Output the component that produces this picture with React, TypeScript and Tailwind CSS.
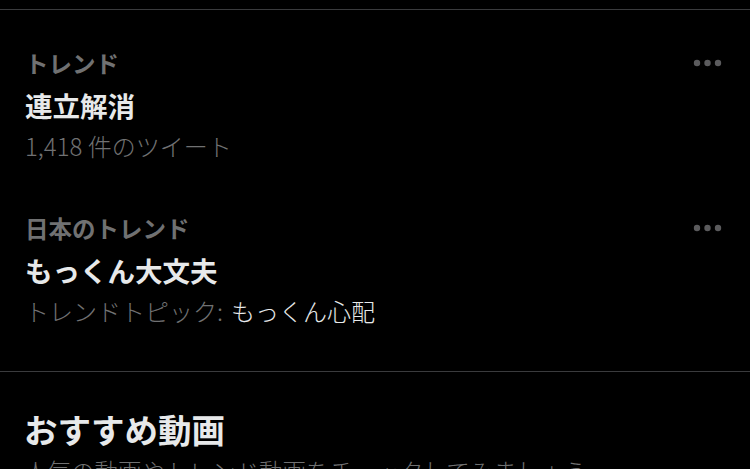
import React from "react";

const font = { fontFamily: '"Noto Sans CJK JP", "Noto Sans", sans-serif' };

function Dots() {
  return (
    <svg width="30" height="8" viewBox="0 0 30 8" className="shrink-0">
      <circle cx="4" cy="4" r="3.2" fill="#5b5b5d" />
      <circle cx="14.5" cy="4" r="3.2" fill="#5b5b5d" />
      <circle cx="25" cy="4" r="3.2" fill="#5b5b5d" />
    </svg>
  );
}

function Trend({
  label,
  title,
  sub,
  className,
}: {
  label: string;
  title: string;
  sub: React.ReactNode;
  className: string;
}) {
  return (
    <div className={`flex flex-col pl-[25px] pr-[27px] ${className}`}>
      <div className="flex items-center justify-between h-[30px]">
        <span className="text-[23.5px] font-bold leading-[30px] text-[#707172]">{label}</span>
        <Dots />
      </div>
      <div className="text-[27.5px] font-bold leading-[54px] text-[#e7e9ea]">{title}</div>
      <div className="text-[24px] font-light leading-[28px] text-[#707172] whitespace-nowrap">{sub}</div>
    </div>
  );
}

export default function App() {
  return (
    <div className="w-[750px] h-[469px] overflow-hidden bg-black" style={font}>
      <div className="h-[9px]" />
      <div className="border-t border-[#3a3b3d]">
        <Trend
          label="トレンド"
          title="連立解消"
          sub="1,418 件のツイート"
          className="pt-[38px] pb-[26px]"
        />
        <Trend
          label="日本のトレンド"
          title="もっくん大文夫"
          sub={
            <>
              トレンドトピック:<span className="text-[#e7e9ea] ml-[8px]">もっくん心配</span>
            </>
          }
          className="pt-[27px] pb-[46px]"
        />
      </div>
      <div className="border-t border-[#3a3b3d] pl-[24px] pt-[35px]">
        <div className="text-[33.5px] font-bold leading-[44px] text-[#e7e9ea]">おすすめ動画</div>
        <div className="text-[23.5px] font-light leading-[40px] text-[#707172] whitespace-nowrap">
          人気の動画やトレンド動画をチェックしてみましょう
        </div>
      </div>
    </div>
  );
}
